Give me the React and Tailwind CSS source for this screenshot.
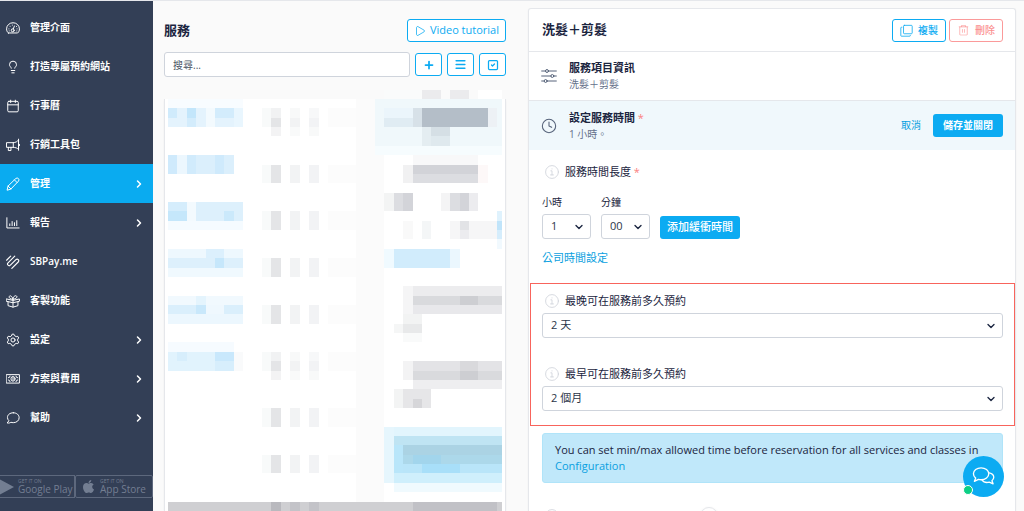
import React from "react";
import {
  Lightbulb,
  Calendar,
  ChevronRight,
  ChevronDown,
  Play,
  Plus,
  Menu,
  SquareCheck,
  Clock,
} from "lucide-react";
import { FaApple } from "react-icons/fa";
import { PiTrashLight } from "react-icons/pi";

const strokeProps = {
  viewBox: "0 0 24 24",
  fill: "none",
  stroke: "currentColor",
  strokeWidth: 1.7,
  strokeLinecap: "round",
  strokeLinejoin: "round",
};

const DashboardIcon = ({ className }) => (
  <svg {...strokeProps} className={className}>
    <path d="M4 20.500h16c2-1.500 3-4 3-7a11 10.500 0 0 0-22 0c0 3 1 5.500 3 7z" />
    <circle cx="11.500" cy="16" r="2.500" />
    <path d="M12.500 13.500l2-5M5 13.500v.1M7 9v.1M11 7v.1M18 9.500v.1M19 13.500v.1M5.500 17v.1M18.500 17v.1" />
  </svg>
);

const MegaphoneIcon = ({ className }) => (
  <svg {...strokeProps} className={className}>
    <path d="M1.500 8h11v8h-11zM12.500 8c4 0 7-2 9-4.500v16c-2-2-5-3.500-9-3.500M21.500 2v19M4 16v5.500h4.500V16M23 11v2" />
  </svg>
);

const PencilIcon = ({ className }) => (
  <svg {...strokeProps} className={className}>
    <path d="M2 22l1.500-6.500L17 2.500a3.200 3.200 0 0 1 4.500 4.500L8.500 20.500zM14.500 5l4.500 4.500M3.500 15.500l5 5" />
  </svg>
);

const ChartIcon = ({ className }) => (
  <svg {...strokeProps} className={className}>
    <path d="M1.500 3v17.500h21M6.500 16.500v-3M10.500 16.500v-7M14.500 16.500v-5M18.500 16.500V8" />
  </svg>
);

const SbPayIcon = ({ className }) => (
  <svg {...strokeProps} strokeWidth="1.900" className={className}>
    <path d="M1 9L8 2M15 2L3.500 13.500a2.600 2.600 0 0 0 4 4L17 8a2.600 2.600 0 0 1 4 4L10 23" />
  </svg>
);

const GiftIcon = ({ className }) => (
  <svg {...strokeProps} className={className}>
    <path d="M1 8.500l11 2.500 11-2.500v4L12 15 1 12.500zM3.500 13.500V20l8.500 2.500 8.500-2.500v-6.500M12 11v11.500M12 9C8 9 5 7.500 5.500 4.500 6.500 1.500 11 3.500 12 9zM12 9c0-4 3.500-7.500 6-5.500s-1 5-6 5.500z" />
  </svg>
);

const GearIcon = ({ className }) => (
  <svg {...strokeProps} className={className}>
    <path d="M9.500 4.500L10.500 2h3l1 2.500 3 1.700 2.700-.5 1.600 2.800-1.800 2v3l1.800 2-1.600 2.800-2.700-.5-3 1.700-1 2.500h-3l-1-2.500-3-1.700-2.700.5-1.600-2.800 1.800-2v-3l-1.800-2 1.600-2.800 2.700.5z" />
    <circle cx="12" cy="12" r="3.500" />
  </svg>
);

const MoneyIcon = ({ className }) => (
  <svg {...strokeProps} className={className}>
    <path d="M1 4.500h22v14.500H1zM4 10a3 3 0 0 0 3-3M20 10a3 3 0 0 1-3-3M4 13.500a3 3 0 0 1 3 3M20 13.500a3 3 0 0 0-3 3M12 9.500v4.500" />
    <ellipse cx="12" cy="11.750" rx="3.500" ry="4" />
  </svg>
);

const HelpIcon = ({ className }) => (
  <svg {...strokeProps} className={className}>
    <path d="M12.500 3C6.500 3 2.500 6.500 2.500 11c0 2.300 1 4.300 2.500 5.700L2 20.500c2.500.5 5 0 6.500-1.200 1.200.4 2.500.7 4 .7 6 0 10-3.800 10-8.500S18.500 3 12.500 3z" />
  </svg>
);

const ChatIcon = ({ className }) => (
  <svg {...strokeProps} strokeWidth="1.400" className={className}>
    <path d="M9.500 3C5 3 1.500 5.700 1.500 9.200c0 1.800.9 3.400 2.300 4.500L2.500 17l4.300-2c.9.3 1.800.4 2.700.4 4.500 0 8-2.700 8-6.200S14 3 9.500 3z" />
    <path d="M18 8.200c2.700.6 4.700 2.400 4.700 4.700 0 1.400-.7 2.600-1.900 3.500l1.200 3.200-4-1.700c-3 .7-6.200-.2-7.600-2.400" />
  </svg>
);

const CopyIcon = ({ className }) => (
  <svg {...strokeProps} strokeWidth="1.500" className={className}>
    <rect x="6.500" y="2.500" width="16" height="15.500" rx="1.500" />
    <path d="M3.500 6h-1a1 1 0 0 0-1 1v14.500a1 1 0 0 0 1 1H18a1 1 0 0 0 1-1v-.5" />
  </svg>
);

const SlidersIcon = ({ className }) => (
  <svg {...strokeProps} strokeWidth="1.500" className={className}>
    <path d="M1 4.500h6M11 4.500h12M1 12h14M19 12h4M1 19.500h4M9 19.500h14" />
    <circle cx="9" cy="4.500" r="2.200" />
    <circle cx="17" cy="12" r="2.200" />
    <circle cx="7" cy="19.500" r="2.200" />
  </svg>
);

const InfoIcon = () => (
  <svg {...strokeProps} strokeWidth="1.500" className="size-[14px] text-gray-300">
    <circle cx="12" cy="12" r="11" />
    <path d="M10 10h2v7M9.500 17h5M12 6.500v.3" />
  </svg>
);

const menu = [
  { label: "管理介面", icon: DashboardIcon },
  { label: "打造專屬預約網站", icon: Lightbulb },
  { label: "行事曆", icon: Calendar },
  { label: "行銷工具包", icon: MegaphoneIcon },
  { label: "管理", icon: PencilIcon, active: true, more: true },
  { label: "報告", icon: ChartIcon, more: true },
  { label: "SBPay.me", icon: SbPayIcon },
  { label: "客製功能", icon: GiftIcon },
  { label: "設定", icon: GearIcon, more: true },
  { label: "方案與費用", icon: MoneyIcon, more: true },
  { label: "幫助", icon: HelpIcon, more: true },
];

// Pixelated list preview: [column, row, columns, rows, colour]
const mosaic = [
  [0, 1, 8, 1, "#f8fcff"],
  [0, 2, 8, 2, "#e4f3fd"],
  [0, 2, 1, 1, "#d0ebfc"],
  [2, 2, 1, 1, "#c3e6fb"],
  [2, 3, 1, 1, "#d3ecfc"],
  [4, 2, 1, 2, "#f3fafe"],
  [5, 2, 2, 1, "#d3ecfc"],
  [7, 2, 1, 2, "#e9f6fe"],
  [0, 7, 7, 2, "#dbeffc"],
  [0, 7, 1, 2, "#cfeafc"],
  [1, 7, 1, 2, "#ecf7fe"],
  [2, 7, 1, 2, "#d1ebfc"],
  [5, 7, 1, 2, "#cfeafc"],
  [0, 12, 8, 2, "#ddf0fc"],
  [0, 12, 2, 1, "#d5edfc"],
  [0, 13, 2, 1, "#c5e7fb"],
  [2, 12, 1, 2, "#f3fafe"],
  [6, 13, 1, 1, "#cbe9fb"],
  [0, 14, 8, 1, "#f5fbff"],
  [0, 17, 8, 1, "#eef8fe"],
  [0, 18, 8, 1, "#ddf0fc"],
  [4, 17, 2, 1, "#dcf0fd"],
  [5, 18, 1, 1, "#c6e7fb"],
  [0, 19, 8, 1, "#f0f9fe"],
  [0, 22, 8, 1, "#f1f9fe"],
  [0, 23, 3, 1, "#daeffc"],
  [3, 22, 1, 1, "#e4f4fd"],
  [3, 23, 1, 1, "#c9e8fb"],
  [4, 23, 2, 1, "#eff8fe"],
  [6, 23, 2, 1, "#daeffc"],
  [0, 24, 8, 1, "#ecf7fe"],
  [0, 27, 7, 1, "#f6fbff"],
  [0, 28, 7, 2, "#e1f3fd"],
  [1, 28, 1, 1, "#d7eefc"],
  [5, 28, 2, 1, "#c9e8fc"],
  [5, 29, 2, 1, "#d7eefc"],
  [7, 28, 1, 2, "#f9fafb"],

  [22, 1, 13.5, 5, "#f0f8fb"],
  [22, 6, 13.5, 1, "#f6fcfe"],
  [23, 0, 4, 1, "#fafbfb"],
  [27, 0, 2, 1, "#ebebed"],
  [30, 0, 2, 1, "#ebebed"],
  [33, 0, 2.5, 1, "#ffffff"],
  [23, 2, 3, 1, "#ebf5fb"],
  [23, 3, 3, 1, "#e0ecf3"],
  [26, 2, 1, 2, "#d7e1e8"],
  [27, 2, 7, 2, "#b4bec8"],
  [34, 2, 1, 2, "#edf1f5"],
  [27, 4, 1, 2, "#e4edf1"],
  [28, 4, 2, 1, "#d5dfe5"],
  [28, 5, 2, 1, "#dfe9ee"],
  [26, 7, 7, 1, "#f8f8f9"],
  [25, 8, 1, 2, "#f1f1f2"],
  [26, 8, 7, 1, "#d2d3d8"],
  [26, 9, 7, 1, "#dcdde1"],
  [33, 8, 1, 2, "#fdf8f8"],
  [23, 11, 1, 2, "#f3f4f4"],
  [24, 11, 1, 2, "#dcdde1"],
  [25, 11, 1, 2, "#d3d4d9"],
  [29, 11, 1, 2, "#f4f4f5"],
  [30, 11, 1, 2, "#dcdde1"],
  [31, 11, 1, 2, "#d3d4d9"],
  [32, 11, 1, 2, "#ececef"],
  [25, 14, 1, 2, "#f9f9f9"],
  [27, 14, 1, 2, "#f4f6f7"],
  [30, 14, 5, 2, "#f6f6f7"],
  [31, 14, 1, 1, "#e2e3e6"],
  [31, 15, 1, 1, "#ececef"],
  [35, 13, 0.5, 1, "#dff2fd"],
  [35, 14, 0.5, 1, "#c0e4fa"],
  [35, 15, 0.5, 1, "#d5edfc"],
  [35, 16, 0.5, 1, "#f1f9fe"],
  [23, 17, 1, 2, "#f0faff"],
  [24, 17, 6, 2, "#d1ecfc"],
  [30, 17, 1, 2, "#ebf7fe"],
  [25, 21, 1, 3, "#f5f5f6"],
  [26, 21, 9.5, 1, "#ececee"],
  [26, 22, 9.5, 1, "#d9dadd"],
  [31, 22, 2, 1, "#cdced2"],
  [26, 23, 9.5, 1, "#e8e8eb"],
  [25, 24, 2, 1, "#f2f3f3"],
  [25, 25, 2, 1, "#e8e9ea"],
  [24, 25, 1, 1, "#f5f6f6"],
  [25, 26, 2, 1, "#f9fafa"],
  [25, 29, 1, 2, "#f3f3f4"],
  [26, 29, 9.5, 1, "#e3e3e6"],
  [31, 29, 2, 1, "#d9d9dc"],
  [26, 30, 9.5, 1, "#d9dadd"],
  [31, 30, 2, 1, "#cdced2"],
  [26, 31, 9.5, 1, "#eeeef0"],
  [24, 32, 1, 2, "#f3f4f4"],
  [25, 32, 3, 2, "#e6e6e8"],
  [26, 33, 1, 1, "#d6d6d9"],
  [23, 36, 1, 6, "#e6f6fd"],
  [24, 36, 11.5, 1, "#e2f5fd"],
  [24, 37, 11.5, 1, "#bfe4f3"],
  [24, 38, 1, 3, "#b9e6fa"],
  [25, 38, 10.5, 1, "#abd3e4"],
  [25, 39, 10.5, 1, "#acd8ea"],
  [26, 39, 3, 1, "#a2d5ec"],
  [25, 40, 10.5, 1, "#b9e5f9"],
  [27, 40, 4, 1, "#a8dff9"],
  [24, 41, 11.5, 1, "#cfeffc"],
  [24, 42, 11.5, 1, "#f0fafe"],
  [0, 44, 35.5, 1, "#cfcfd2"],
  [11, 44, 1, 1, "#b9b9be"],
  [13, 44, 1, 1, "#c3c3c8"],
  [15, 44, 1, 1, "#c3c3c8"],
  [26, 44, 9, 1, "#c1c1c6"],
];

// Every list row repeats the same three grey columns
const rowStarts = [2, 8, 13, 18, 23, 28, 34, 39];
rowStarts.forEach((row) => {
  mosaic.push(
    [10, row, 1, 2, "#f8fafa"],
    [11, row, 1, 2, "#e4e5e7"],
    [13, row, 1, 2, "#f2f3f4"],
    [15, row, 1, 2, "#f2f3f5"],
    [17, row, 3, 2, "#fcfcfc"]
  );
});

// First and sixth rows fade out over three cells
[2, 28].forEach((row) => {
  mosaic.push(
    [11, row, 1, 1, "#f1f2f3"],
    [13, row, 1, 1, "#f8f9f9"],
    [15, row, 1, 1, "#f7f8f9"],
    [11, row + 2, 1, 1, "#f3f3f4"],
    [13, row + 2, 1, 1, "#f9fafa"],
    [15, row + 2, 1, 1, "#f8f9f9"]
  );
});

const outlineButton =
  "flex items-center justify-center rounded-[3px] border border-[#0cabf2] bg-white text-[#0cabf2]";

const Sidebar = () => (
  <aside className="flex w-[153px] shrink-0 flex-col bg-[#333f56] pt-[7px] text-white">
    <nav>
      {menu.map(({ label, icon: Icon, active, more }) => (
        <a
          key={label}
          href="#"
          className={`flex h-[39px] items-center gap-[10px] pr-2 pl-[6px] text-[10px] font-semibold ${
            active ? "bg-[#0aabf0]" : ""
          }`}
        >
          <Icon className="size-[14px] shrink-0" strokeWidth={1.7} />
          <span className="flex-1">{label}</span>
          {more && <ChevronRight className="size-3" strokeWidth={3} />}
        </a>
      ))}
    </nav>
    <div className="mt-auto mb-[13px] flex text-[#737e92]">
      <a href="#" className="flex h-[23px] w-[75px] items-center gap-1 border border-l-0 border-[#5d687d]">
        <svg viewBox="0 0 14 16" className="h-4 w-[14px]" fill="currentColor">
          <path d="M0 .5L14 8 0 15.500z" />
        </svg>
        <span className="flex flex-col whitespace-nowrap">
          <span className="text-[5px] leading-[5px]">GET IT ON</span>
          <span className="text-[10px] leading-[11px]">Google Play</span>
        </span>
      </a>
      <a href="#" className="flex h-[23px] flex-1 items-center gap-1 rounded-[2px] border border-[#5d687d] pl-[5px]">
        <FaApple className="size-[15px]" />
        <span className="flex flex-col whitespace-nowrap">
          <span className="text-[5px] leading-[5px]">GET IT ON</span>
          <span className="text-[10px] leading-[11px]">App Store</span>
        </span>
      </a>
    </div>
  </aside>
);

const ServiceList = () => (
  <section className="flex w-[375px] shrink-0 flex-col pt-[18px] pr-[22px] pl-[11px]">
    <div className="flex items-center justify-between">
      <h1 className="text-[13px] font-bold">服務</h1>
      <button className={`${outlineButton} h-[23px] gap-1 px-[6px] text-[11px]`}>
        <Play className="size-3" strokeWidth={1.5} />
        Video tutorial
      </button>
    </div>
    <div className="mt-[10px] flex items-center gap-[5px]">
      <input
        aria-label="搜尋"
        placeholder="搜尋..."
        className="h-[25px] min-w-0 flex-1 rounded-[3px] border border-[#cfd4dc] bg-white px-2 text-[10px] placeholder:text-gray-600"
      />
      <button aria-label="新增" className={`${outlineButton} h-[23px] w-[27px]`}>
        <Plus className="size-3" strokeWidth={3.5} />
      </button>
      <button aria-label="排序" className={`${outlineButton} h-[23px] w-[27px]`}>
        <Menu className="size-[13px]" strokeWidth={3} />
      </button>
      <button aria-label="選取" className={`${outlineButton} h-[23px] w-[27px]`}>
        <SquareCheck className="size-3" strokeWidth={2.5} />
      </button>
    </div>
    <div className="mt-[22px] flex-1 border-x border-gray-200 bg-white px-[3px] shadow-xs">
      <svg
        viewBox="0 1 35.5 43.9"
        preserveAspectRatio="none"
        shapeRendering="crispEdges"
        className="h-[411px] w-full overflow-visible"
      >
        <rect x="20" y="1" width="3" height="43" fill="#fbfbfb" />
        {mosaic.map(([x, y, w, h, fill], i) => (
          <rect key={i} x={x} y={y} width={w} height={h} fill={fill} />
        ))}
      </svg>
    </div>
  </section>
);

const SelectBox = ({ id, value, className }) => (
  <div className={`relative ${className}`}>
    <select
      id={id}
      className="block h-[25px] w-full appearance-none rounded-[3px] border border-[#cfd4dc] bg-white px-2 text-[11px] text-[#2c3648]"
    >
      <option>{value}</option>
    </select>
    <ChevronDown
      className="pointer-events-none absolute top-[7px] right-[6px] size-3"
      strokeWidth={2.7}
    />
  </div>
);

const FieldLabel = ({ htmlFor, children }) => (
  <label htmlFor={htmlFor} className="flex items-center gap-[6px] pl-[3px] text-[11px] leading-4">
    <InfoIcon />
    <span>{children}</span>
  </label>
);

const ServiceDetail = () => (
  <main className="mt-[7px] mr-2 min-w-0 flex-1 rounded-t-[3px] border border-b-0 border-gray-200 bg-white shadow-xs">
    <header className="flex h-[43px] items-center gap-[3px] border-b border-gray-200 pr-3 pl-[13px]">
      <h2 className="flex-1 text-[13px] font-bold">洗髮＋剪髮</h2>
      <button className={`${outlineButton} h-[23px] gap-[5px] px-[7px] text-[10px] font-medium`}>
        <CopyIcon className="size-[13px]" />
        複製
      </button>
      <button className="flex h-[23px] items-center gap-[5px] rounded-[3px] border border-[#fb9a9a] bg-white px-[7px] text-[10px] font-medium text-[#fb9090]">
        <PiTrashLight className="size-[13px]" />
        刪除
      </button>
    </header>
    <div className="flex h-[49px] items-center gap-3 border-b border-gray-200 px-3">
      <SlidersIcon className="size-4 text-[#56637a]" />
      <div>
        <h3 className="text-[11px] leading-4 font-bold">服務項目資訊</h3>
        <p className="text-[10px] leading-4 text-[#64708a]">洗髮＋剪髮</p>
      </div>
    </div>
    <div className="flex h-[49px] items-center gap-3 bg-[#f0f8fc] px-3">
      <Clock className="size-4 text-[#56637a]" strokeWidth={1.6} />
      <div className="flex-1">
        <h3 className="text-[11px] leading-4 font-bold">
          設定服務時間 <span className="font-normal text-[#fb8080]">*</span>
        </h3>
        <p className="text-[10px] leading-4 text-[#64708a]">1 小時。</p>
      </div>
      <button className="text-[10px] text-[#0a9fe0]">取消</button>
      <button className="h-[23px] rounded-[3px] bg-[#0cabf2] px-[10px] text-[10px] font-bold text-white">
        儲存並關閉
      </button>
    </div>

    <div className="pt-[14px] pr-3 pl-[13px]">
      <FieldLabel htmlFor="hours">
        服務時間長度 <span className="text-[#fb8080]">*</span>
      </FieldLabel>
      <div className="mt-[14px] flex items-end gap-[10px]">
        <div>
          <label htmlFor="hours" className="block pb-1 text-[10px] leading-4">
            小時
          </label>
          <SelectBox id="hours" value="1" className="w-[49px]" />
        </div>
        <div>
          <label htmlFor="minutes" className="block pb-1 text-[10px] leading-4">
            分鐘
          </label>
          <SelectBox id="minutes" value="00" className="w-[49px]" />
        </div>
        <button className="h-[23px] rounded-[3px] bg-[#0cabf2] px-[7px] text-[11px] font-medium text-white">
          添加緩衝時間
        </button>
      </div>
      <a href="#" className="mt-[11px] block text-[11px] leading-4 text-[#0a9fe0]">
        公司時間設定
      </a>
    </div>

    <div className="mt-[17px] ml-px flex flex-col gap-[28px] border border-[#f8645c] pt-[9px] pr-[11px] pb-[14px] pl-[11px]">
      <div>
        <FieldLabel htmlFor="latest">最晚可在服務前多久預約</FieldLabel>
        <SelectBox id="latest" value="2 天" className="mt-1" />
      </div>
      <div>
        <FieldLabel htmlFor="earliest">最早可在服務前多久預約</FieldLabel>
        <SelectBox id="earliest" value="2 個月" className="mt-1" />
      </div>
    </div>

    <div className="mt-[7px] mr-3 ml-[13px] rounded-[3px] border border-[#b0e4f9] bg-[#c0e8fa] py-2 pr-2 pl-3 text-[11px] leading-4">
      You can set min/max allowed time before reservation for all services and classes in{" "}
      <a href="#" className="text-[#0a9fe0]">
        Configuration
      </a>
    </div>

    <div className="mt-[24px] flex items-center gap-[141px] pl-4">
      <InfoIcon />
      <span className="size-[18px] rounded-full border border-gray-200 bg-white shadow-sm" />
    </div>
  </main>
);

const App = () => (
  <div className="flex h-screen overflow-hidden border-t border-gray-200 bg-[#fafafa] font-['Open_Sans','Noto_Sans_CJK_TC',sans-serif] text-[#1b2540]">
    <Sidebar />
    <ServiceList />
    <ServiceDetail />
    <button
      aria-label="聊天"
      className="fixed right-5 bottom-[14px] flex size-[41px] items-center justify-center rounded-full bg-[#0cabf2] text-white"
    >
      <ChatIcon className="size-[23px]" />
      <span className="absolute bottom-[2px] left-0 size-[10px] rounded-full border border-white bg-[#0ccf85]" />
    </button>
  </div>
);

export default App;
